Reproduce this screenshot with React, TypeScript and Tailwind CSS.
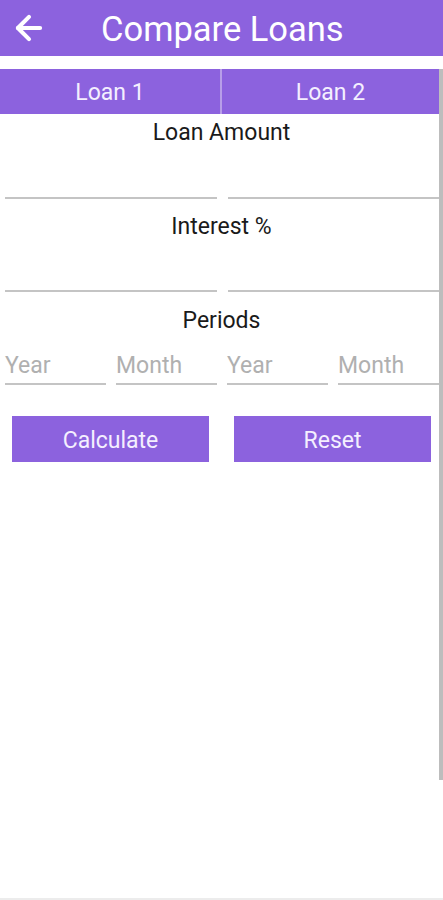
import { ArrowLeft } from 'lucide-react';

const purple = 'bg-[#8c62de]';

function Line({ className = '' }: { className?: string }) {
  return <div className={`h-[2px] bg-[#c4c4c4] ${className}`} />;
}

function Field({ placeholder }: { placeholder?: string }) {
  return (
    <div className="flex flex-1 flex-col">
      <div className="h-[34px] text-[23px] leading-[34px] text-[#b0b0b0]">{placeholder}</div>
      <Line />
    </div>
  );
}

export default function App() {
  return (
    <div className="relative h-[900px] w-[443px] overflow-hidden bg-white font-['Roboto',sans-serif]">
      <header className={`flex h-[56px] items-center ${purple} text-white`}>
        <ArrowLeft className="ml-[10px] h-[38px] w-[38px]" strokeWidth={2.6} />
        <h1 className="ml-[53px] pt-[3px] text-[34.5px] leading-none">Compare Loans</h1>
      </header>
      <div className="flex">
        <main className="w-[439px]">
          <div className="mt-[13px] flex h-[45px] text-[23px] text-[#f4efff]">
            <div className={`flex w-[220px] items-center justify-center pt-[4px] ${purple}`}>Loan 1</div>
            <div className="w-[2px] bg-[#b89ee9]" />
            <div className={`flex flex-1 items-center justify-center pt-[4px] ${purple}`}>Loan 2</div>
          </div>

          <p className="mt-[6px] pl-[4px] text-center text-[23px] leading-[26px] text-[#1a1a1a]">Loan Amount</p>
          <div className="mt-[51px] flex gap-[11px] pl-[5px]">
            <Line className="flex-1" />
            <Line className="flex-1" />
          </div>

          <p className="mt-[15px] pl-[4px] text-center text-[23px] leading-[26px] text-[#1a1a1a]">Interest %</p>
          <div className="mt-[50px] flex gap-[11px] pl-[5px]">
            <Line className="flex-1" />
            <Line className="flex-1" />
          </div>

          <p className="mt-[16px] pl-[4px] text-center text-[23px] leading-[26px] text-[#1a1a1a]">Periods</p>
          <div className="mt-[15px] flex gap-[10px] pl-[5px]">
            <Field placeholder="Year" />
            <Field placeholder="Month" />
            <Field placeholder="Year" />
            <Field placeholder="Month" />
          </div>

          <div className="mt-[31px] flex justify-between pl-[12px] pr-[8px]">
            <button className={`h-[46px] w-[197px] pt-[4px] ${purple} text-[23px] text-[#f4efff]`}>Calculate</button>
            <button className={`h-[46px] w-[197px] pt-[4px] ${purple} text-[23px] text-[#f4efff]`}>Reset</button>
          </div>
        </main>
        <div className="mt-[13px] h-[711px] w-[4px] bg-[#bdbdbd]" />
      </div>
      <div className="absolute bottom-0 left-0 h-[2px] w-full bg-[#ececec]" />
    </div>
  );
}
